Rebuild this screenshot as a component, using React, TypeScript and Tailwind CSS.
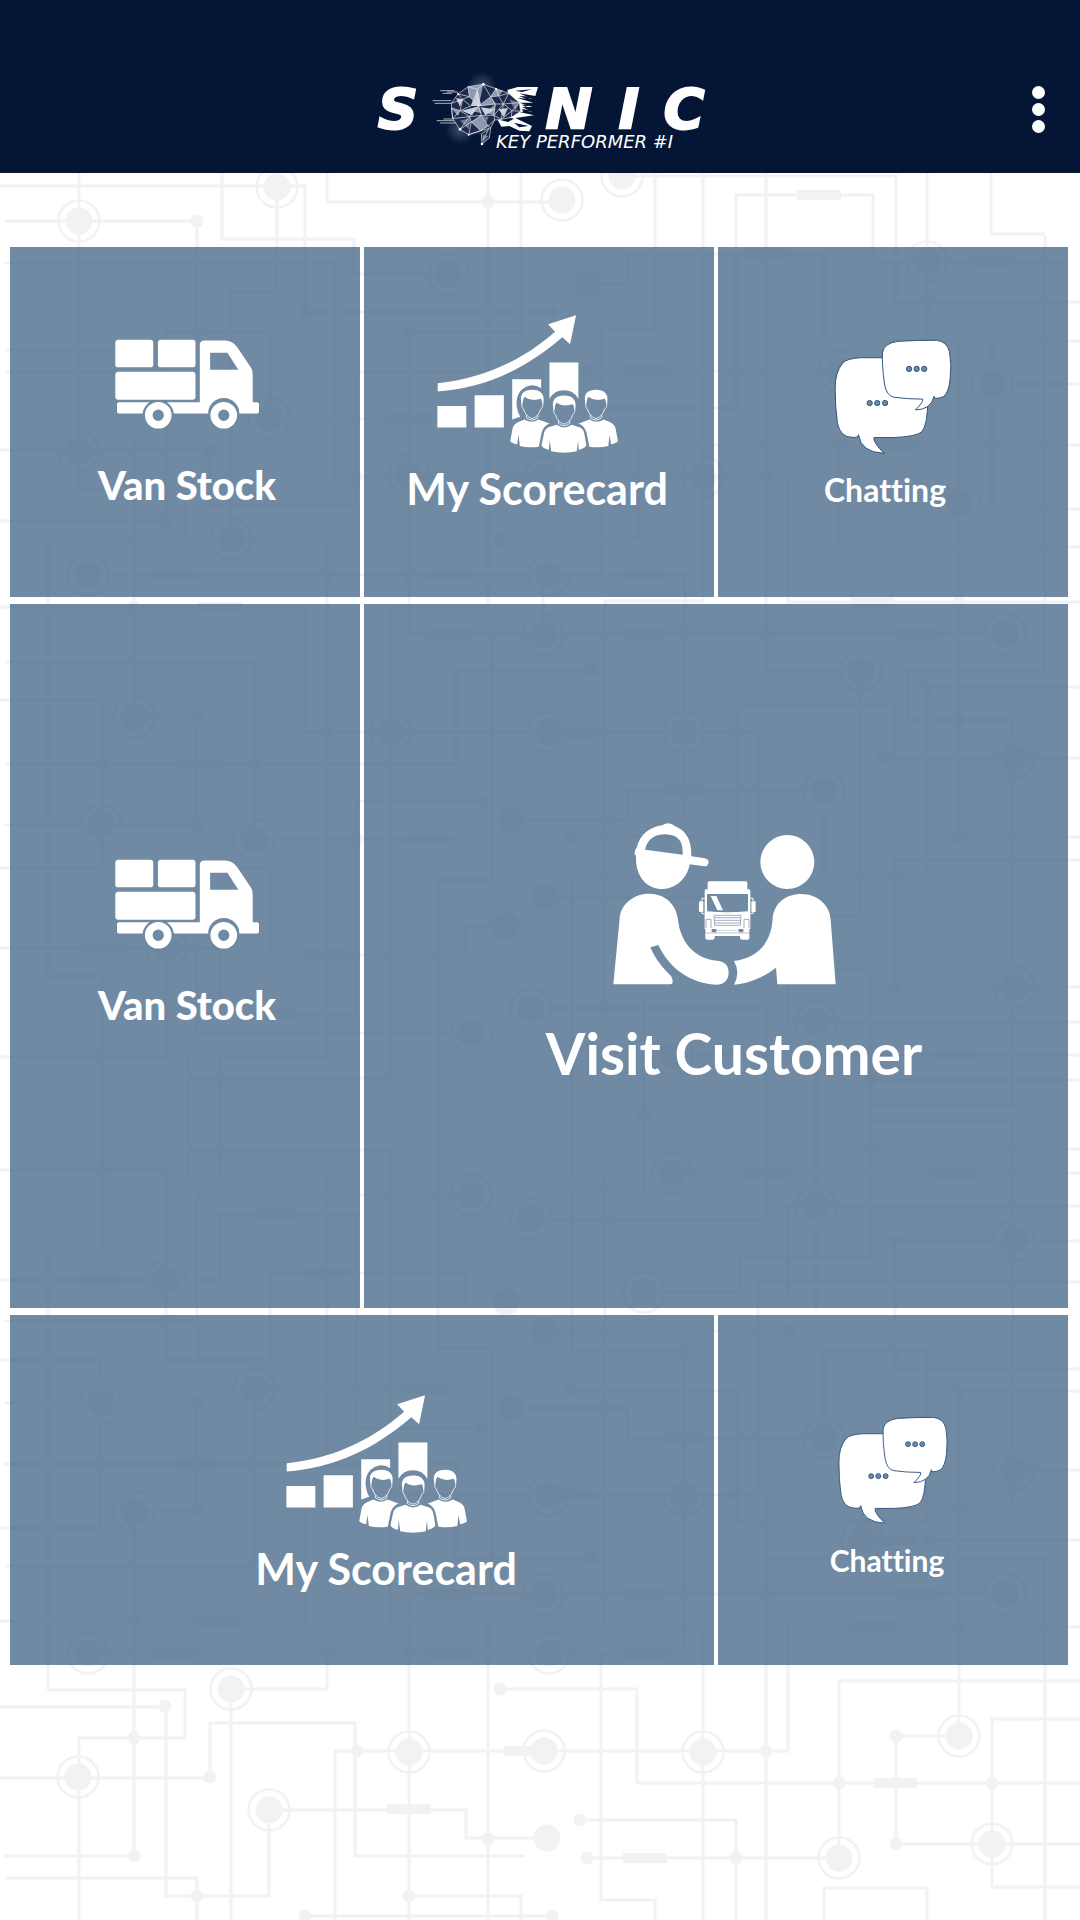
import type { ReactNode } from "react";
import { clsx } from "clsx";

type TileProps = {
  label: string;
  icon: ReactNode;
  className?: string;
  labelClassName: string;
};

// traces of the circuit board behind the tiles
const traces = [
  "M79 173V490H118",
  "M0 186H305V312H552",
  "M277 187V292H231V539",
  "M5 221H197V332",
  "M222 173V239H354V274H449",
  "M327 173V202H488H562",
  "M488 173V607H390V1078H189",
  "M521 173V332H409V634H1005",
  "M5 263H335V477H788V602H1080",
  "M5 350H114M5 372H114",
  "M0 450H210V505H355V372H525",
  "M0 521H166V332H270V419H466V395H490",
  "M134 440V717H197V825H5",
  "M88 575H685V820",
  "M231 539H327V1057H220V1175",
  "M185 505V539H48V976H102V1253H48V1690",
  "M0 607H305V732H758V860",
  "M5 662H254V839H458",
  "M0 700H102V868H0",
  "M5 764H456V670H592",
  "M482 801H357V1014H270",
  "M240 868H270V955H466V926H506",
  "M0 948H220V1014M166 948V1057H0",
  "M197 940V1033H471",
  "M189 1053V1175",
  "M189 1150H390V1621H488V1920",
  "M0 1170H166V1281",
  "M220 1171H327V1464",
  "M471 1195H197V1321",
  "M357 1300V1214H220V1280H0",
  "M466 1302V1273H270V1360H166V1300",
  "M438 1348V880H492V634",
  "M511 820H627V790H824",
  "M605 1008V601H703V173",
  "M543 634V575",
  "M766 173V671H861V916H790",
  "M895 758V705H738V837H570",
  "M1080 687H927V877H824V791",
  "M883 758H1080",
  "M1080 860H895V987H1080",
  "M1045 1920V1558H766V1495",
  "M1045 236V671H908V720H1013V1105H873",
  "M959 345V837H1080",
  "M740 898H545",
  "M700 877H572V1173H605V1627H703V1920",
  "M531 1008H766V1220H531",
  "M644 1115V1189H572V1351H684",
  "M644 1000V1115",
  "M672 1055H1080M672 1173H1080",
  "M1080 1022H788V985M816 1022V1310",
  "M871 1080H1080M871 1149H1080",
  "M830 970H871V1258H740V1292H644",
  "M873 1122H1013V1509",
  "M788 1300V1206H1080",
  "M1080 1241H895V1320",
  "M1080 1282H758V1495H409",
  "M48 1690H185V1738H79V1920",
  "M5 1321H198V1360",
  "M166 1200V1360M166 1706V1896H269V1810H466V1838H547",
  "M0 1360H101V1528H0",
  "M5 1403H197V1511H134V1856",
  "M5 1464H456V1558H592",
  "M254 1389H458M254 1389V1566H5",
  "M357 1300V1428H482",
  "M438 1348H492V1594",
  "M0 1621H305V1510",
  "M1005 1594H409V1920",
  "M88 1653H688M327 1653V1689H231V1920",
  "M0 1707H165",
  "M0 1778H210V1723H355V1856H525",
  "M335 1920V1751H788V1627H1080",
  "M500 1689H637V1783H1080",
  "M601 1653V1900H655V1920",
  "M684 1351V1653",
  "M766 1558V1920",
  "M587 1858H839V1681H1080",
  "M580 1820H736V1920",
  "M544 1331H788",
  "M511 1408H627V1438H824V1351H927V1523H895",
  "M570 1391H738V1523H870",
  "M895 1351V1369H1080",
  "M1080 1391H959V1736H896V1844H1080",
  "M1014 1470H1080",
  "M862 1540V1509H1014M928 1540H1080",
  "M1080 1719H992V1887H1080",
  "M5 1856H134M5 1878H197V1920",
  "M305 1916H552M409 1896H521V1920",
  "M824 1920V1888H927V1920",
  "M622 176H896V302H1080",
  "M655 173V329H601V575",
  "M590 408H736V195H873V262H1065",
  "M927 173V345",
  "M991 173V234H1045",
  "M588 284H627V254H824V341H930",
  "M587 371H839",
  "M992 384H1080M1080 341H992V509H1080",
  "M500 539H638V445H1080",
  "M839 445V547H1080",
  "M959 492V602",
];

const rings = [
  [79, 221], [277, 187], [562, 200], [622, 176], [449, 274], [269, 418],
  [409, 474], [545, 477], [703, 477], [231, 539], [78, 451], [88, 575],
  [549, 575], [927, 262], [839, 371], [992, 384], [959, 503], [134, 717],
  [101, 825], [254, 839], [166, 948], [390, 732], [549, 732], [684, 732],
  [543, 634], [1005, 634], [861, 671], [824, 791], [1014, 758], [471, 1033],
  [531, 1009], [816, 1022], [1014, 987], [672, 1055], [471, 1195],
  [531, 1219], [672, 1173], [816, 1206], [1014, 1241], [166, 1281],
  [644, 1292], [101, 1403], [254, 1389], [134, 1511], [824, 1438],
  [1014, 1470], [549, 1495], [684, 1495], [862, 1540], [543, 1594],
  [1005, 1594], [88, 1653], [549, 1653], [231, 1689], [409, 1752],
  [544, 1751], [703, 1752], [78, 1777], [269, 1810], [959, 1736],
  [992, 1844], [839, 1858],
];

const discs = [
  [588, 284], [511, 820], [545, 897], [506, 926], [506, 1302], [544, 1331],
  [511, 1408], [547, 1838],
];

const dots = [
  [197, 221], [488, 202], [305, 312], [552, 312], [197, 332], [409, 332],
  [210, 451], [356, 477], [165, 521], [327, 575], [409, 575], [134, 607],
  [766, 477], [927, 302], [587, 371], [736, 371], [992, 445], [839, 445],
  [500, 540], [959, 602], [684, 634], [766, 634], [592, 670], [927, 687],
  [197, 717], [327, 732], [736, 732], [959, 720], [883, 758], [102, 764],
  [254, 764], [482, 801], [197, 825], [605, 820], [357, 839], [570, 837],
  [895, 877], [959, 837], [895, 987], [605, 1008], [102, 1057], [219, 1078],
  [219, 1150], [102, 1170], [644, 1115], [871, 1080], [871, 1149],
  [605, 1220], [895, 1241], [166, 1321], [788, 1331], [684, 1351],
  [895, 1351], [357, 1389], [570, 1391], [959, 1391], [197, 1403],
  [605, 1408], [482, 1428], [101, 1464], [253, 1464], [736, 1495],
  [197, 1511], [959, 1509], [928, 1540], [592, 1558], [684, 1594],
  [766, 1594], [134, 1621], [959, 1627], [327, 1653], [409, 1653],
  [500, 1689], [165, 1706], [134, 1738], [357, 1751], [766, 1751],
  [210, 1777], [839, 1783], [992, 1783], [896, 1736], [580, 1820],
  [488, 1839], [896, 1844], [134, 1856], [587, 1858], [736, 1858],
  [197, 1896], [409, 1896], [305, 1916], [552, 1916],
];

const chips = [
  [819, 195], [766, 254], [992, 261], [645, 371], [409, 419], [895, 445],
  [526, 477], [175, 575], [449, 575], [645, 575], [873, 602], [220, 607],
  [449, 634], [645, 634], [918, 634], [573, 733], [197, 764], [685, 790],
  [426, 839], [101, 948], [327, 955], [275, 1014], [955, 1055], [765, 1173],
  [953, 1173], [275, 1214], [327, 1273], [101, 1280], [427, 1389],
  [685, 1438], [197, 1464], [575, 1495], [895, 1540], [449, 1594],
  [645, 1594], [918, 1594], [219, 1621], [873, 1627], [175, 1653],
  [449, 1653], [645, 1653], [526, 1751], [895, 1783], [409, 1809],
  [645, 1858],
];

function CircuitBackground() {
  return (
    <svg
      aria-hidden="true"
      viewBox="0 0 1080 1920"
      preserveAspectRatio="xMidYMin slice"
      className="absolute inset-0 -z-10 h-full w-full text-[#f1f2f4]"
    >
      <path d={traces.join("")} fill="none" stroke="currentColor" strokeWidth="3" />
      {rings.map(([x, y]) => (
        <g key={`${x}-${y}`}>
          <circle cx={x} cy={y} r="20.5" fill="none" stroke="currentColor" strokeWidth="2.5" />
          <circle cx={x} cy={y} r="13.5" fill="currentColor" />
        </g>
      ))}
      {discs.map(([x, y]) => (
        <circle key={`${x}-${y}`} cx={x} cy={y} r="13.5" fill="currentColor" />
      ))}
      {dots.map(([x, y]) => (
        <circle key={`${x}-${y}`} cx={x} cy={y} r="6.5" fill="currentColor" />
      ))}
      {chips.map(([x, y]) => (
        <rect key={`${x}-${y}`} x={x - 22} y={y - 5} width="44" height="10" fill="currentColor" />
      ))}
    </svg>
  );
}

function Logo() {
  return (
    <svg
      role="img"
      aria-label="Sonic Key Performer #I"
      viewBox="0 0 376 76"
      className="h-[76px] w-[376px] overflow-visible"
      fill="#fff"
      fontFamily="'DejaVu Sans', sans-serif"
      fontStyle="italic"
    >
      <defs>
        <radialGradient id="brain-glow">
          <stop offset="0" stopColor="#8fa0c0" stopOpacity="0.4" />
          <stop offset="1" stopColor="#8fa0c0" stopOpacity="0" />
        </radialGradient>
      </defs>
      <g fontSize="56" fontWeight="700" textAnchor="middle" stroke="#fff" strokeWidth="2">
        <text x="46" y="52">S</text>
        <text x="217" y="52">N</text>
        <text x="277" y="52">I</text>
        <text x="332" y="52">C</text>
      </g>
      <text x="144" y="72" fontSize="18">
        KEY PERFORMER #I
      </text>
      <g transform="translate(80 0) scale(.3333)">
        <circle cx="150" cy="32" r="45" fill="url(#brain-glow)" />
        <circle cx="85" cy="160" r="45" fill="url(#brain-glow)" />
        <path
          d="M25 44H68M32 52H60M44 48H78M2 74H58M8 82H60M14 134H66M24 141H72M34 129H62"
          stroke="#fff"
          strokeWidth="2"
        />
        <path d="M226 42L258 33H318L310 60L262 52L300 68L256 66L304 80L262 80L302 92L270 94L300 106L262 108L306 118L250 126L300 150L292 166L262 164L232 150L208 152L196 130L228 138L246 128L226 124L262 100L230 60Z" />
        <path
          d="M250 44L300 40L270 48ZM262 60L312 62L286 70ZM270 86L306 84L280 92ZM246 140L290 150L262 154ZM270 100L304 102L276 112Z"
          fill="#051535"
        />
        <path
          d="M58 82L78 54L108 32L154 25L192 38L230 52L262 80L266 106L238 124L208 130L188 132L176 156L170 160L172 186L150 204L148 174L110 176L84 160L62 128Z"
          fill="#1d2a4b"
        />
        <path
          d="M108 32L154 25L140 90L112 62ZM140 90L176 62L190 84ZM140 90L112 104L150 112ZM118 138L148 118L168 150L146 164ZM176 62L192 38L214 44L200 60ZM58 96L84 104L78 120ZM160 110L190 84L186 118Z"
          fill="#8f99ae"
        />
        <path
          d="M116 90L148 90L136 40ZM88 104L120 118L136 92ZM200 100L228 96L216 124ZM146 94L190 100L160 118ZM72 66L92 70L84 92Z"
          fill="#c9cedb"
        />
        <path
          d="M232 70L262 80L250 104ZM150 120L170 122L160 146ZM84 134L116 126L110 160ZM152 176L170 180L152 200Z"
          fill="#6d7993"
        />
        <path
          d="M58 82L78 54L108 32L154 25L192 38L230 52L262 80L266 106L238 124L208 130L188 132L176 156L146 164L110 176L84 160L62 128ZM58 82L92 70L78 54L112 62L108 32L136 40L154 25L176 62L192 38L200 60L230 52L214 84L262 80L240 104L266 106M92 70L112 62L140 90L176 62L200 60L214 84L190 84L176 62M92 70L84 104L58 96L62 128L84 104L116 90L92 70M84 104L112 122L62 128M112 122L84 160L118 138L112 122L148 118L118 138L110 176L146 164L118 138M148 118L168 150L146 164M148 118L140 90L190 84L186 118L148 118M186 118L214 84L208 130L186 118L188 132L168 150L176 156M208 130L240 104L214 84M240 104L238 124M176 156L172 186L150 204L148 174L170 160L152 192M140 90L112 122M140 90L136 40"
          fill="none"
          stroke="#e8ebf2"
          strokeWidth="2"
        />
        <circle cx="78" cy="54" r="3" />
        <circle cx="154" cy="25" r="4" />
        <circle cx="192" cy="38" r="3" />
        <circle cx="84" cy="160" r="4" />
        <circle cx="150" cy="204" r="4" />
        <circle cx="110" cy="176" r="3" />
      </g>
    </svg>
  );
}

function VanIcon() {
  return (
    <svg aria-hidden="true" viewBox="72 58 436 270" className="h-[90px] w-[145px]" fill="currentColor">
      <rect x="73" y="60" width="114" height="83" rx="9" />
      <rect x="201" y="60" width="113" height="83" rx="9" />
      <rect x="73" y="156" width="241" height="84" rx="9" />
      <path d="M84 248H176A47 47 0 0 0 155 282H84q-6 0-6-6V254q0-6 6-6z" />
      <path
        fillRule="evenodd"
        d="M327 248H228A47 47 0 0 1 249 282H352A47 47 0 0 1 446 282H499q6 0 6-6V254q0-6-6-6H486V163q0-12-6-20L439 82Q426 62 403 62H341q-14 0-14 14zM358 99H410L443 150H358z"
      />
      <path
        fillRule="evenodd"
        d="M162 287a40 40 0 1 0 80 0a40 40 0 1 0-80 0zM185 287a17 17 0 1 1 34 0a17 17 0 1 1-34 0zM359 287a40 40 0 1 0 80 0a40 40 0 1 0-80 0zM382 287a17 17 0 1 1 34 0a17 17 0 1 1-34 0z"
      />
    </svg>
  );
}

function Head({ x, y }: { x: number; y: number }) {
  return (
    <g transform={`translate(${x} ${y})`}>
      <path d="M-33 35C-37 10-22 0 0 0C25 0 38 14 34 36L30 46C31 36 29 30 25 26C8 34-12 30-22 21C-28 27-28 35-29 46Z" />
      <path
        d="M-31 36C-33 50-28 56-26 58C-20 76-10 84 0 86C10 84 20 76 26 58C30 54 34 50 32 36M-17 76V84Q0 98 17 84V76"
        fill="none"
        stroke="currentColor"
        strokeWidth="2.5"
      />
    </g>
  );
}

function ScorecardIcon() {
  const shoulder =
    "M313 362Q335 376 355 362L388 374Q370 382 365 400L356 444Q325 448 299 442L295 408L291 437Q275 434 270 428L277 390Q280 376 295 370z";

  return (
    <svg aria-hidden="true" viewBox="50 48 544 415" className="mr-5 h-[138px] w-[181px]" fill="currentColor">
      <path d="M52 253C180 240 300 190 405 98L384 76L468 49L450 136L427 115C310 215 190 268 52 278z" />
      <path d="M51 322H138V386H51zM163 289H251V386H163z" />
      <path d="M276 241H363V268A48 52 0 0 0 289 310Q289 335 300 354L276 362z" />
      <path d="M388 191H475V300A50 50 0 0 0 388 300z" />
      <Head x={336} y={273} />
      <Head x={528} y={273} />
      <path d={shoulder} />
      <path d={shoulder} transform="matrix(-1 0 0 1 864 0)" />
      <Head x={432} y={290} />
      <path d="M410 378Q432 394 455 378L480 386Q490 390 493 405L499 440Q495 450 476 454L474 425L470 458Q432 466 393 458L389 425L386 454Q368 450 364 440L372 402Q376 388 390 384z" />
    </svg>
  );
}

function ChatIcon({ className }: { className: string }) {
  return (
    <svg
      aria-hidden="true"
      viewBox="69 53 358 350"
      className={className}
      fill="#fff"
      stroke="#2c527f"
      strokeWidth="3"
    >
      <path d="M215 110H150Q108 112 95 126Q71 155 72 205Q72 260 79 310Q88 350 120 352Q134 354 142 350L143 344Q150 398 221 401Q186 366 190 353H250Q320 350 336 335Q353 315 354 240Z" />
      <path d="M265 60Q330 56 380 57Q412 60 420 92Q427 130 422 175Q418 215 402 228Q390 234 374 234L373 227Q364 268 316 269Q342 244 338 236Q290 236 250 230Q228 225 222 190Q214 130 216 95Q220 65 265 60z" />
      <g fill="#708aa4">
        <circle cx="297" cy="144" r="8" />
        <circle cx="320" cy="144" r="8" />
        <circle cx="343" cy="144" r="8" />
        <circle cx="177" cy="248" r="8" />
        <circle cx="200" cy="248" r="8" />
        <circle cx="224" cy="248" r="8" />
      </g>
    </svg>
  );
}

function VisitIcon() {
  return (
    <svg aria-hidden="true" viewBox="37 39 669 486" className="mr-5 h-[162px] w-[223px]" fill="currentColor">
      <path
        fillRule="evenodd"
        d="M102 133Q100 122 108 113C118 72 150 50 185 46Q205 33 222 48C258 62 273 92 272 139L313 145Q324 148 324 158Q321 170 311 169L267 163C260 205 225 237 186 237C140 237 104 202 106 138zM133 119C140 88 162 72 195 73C232 75 248 92 246 134z"
      />
      <path d="M57 325C60 282 100 251 145 251C195 251 228 285 232 330C240 400 285 447 350 452Q384 456 384 488Q382 524 345 524C270 520 205 475 173 405L149 412C165 450 190 478 211 498Q218 508 216 518Q214 523 208 523H38z" />
      <circle cx="560" cy="156" r="81" />
      <path d="M516 325C520 280 555 252 602 252C650 252 688 285 690 330L705 523H530L526 473C490 500 450 520 400 524Q420 488 400 453C470 445 512 400 516 325z" />
      <path d="M325 214H435Q439 214 440 218V238H445Q449 239 449 243V357H312V243Q312 239 316 238H321V218Q322 214 325 214z" />
      <rect x="295" y="274" width="13" height="32" rx="3" />
      <rect x="452" y="274" width="13" height="32" rx="3" />
      <path
        d="M312 265H304V274M304 306V311H312M449 265H457V274M457 306V311H449"
        fill="none"
        stroke="currentColor"
        strokeWidth="3"
      />
      <path d="M319 252H442V304Q380 310 319 304z" fill="#708aa4" />
      <path d="M330 258H347L367 301H350z" />
      <path
        d="M340 316H421L419 346H342zM341 323H420M341 331H420M342 339H419M316 354V328H331V354M430 354V328H445V354"
        fill="none"
        stroke="#708aa4"
        strokeWidth="2"
      />
      <path d="M314 357H446V368H314z" />
      <path d="M333 357H347V367H333zM414 357H428V367H414z" fill="#708aa4" />
      <path d="M347 361H414" stroke="#708aa4" strokeWidth="1" />
      <path d="M314 370H446V385Q445 389 441 389H423Q419 388 418 384V378H342V384Q341 388 337 389H319Q314 388 314 384z" />
    </svg>
  );
}

function Tile({ label, icon, className, labelClassName }: TileProps) {
  return (
    <button
      type="button"
      className={clsx(
        "flex cursor-pointer flex-col items-center justify-center bg-[#426384]/75 text-white",
        className,
      )}
    >
      {icon}
      <span className={clsx("whitespace-nowrap", labelClassName)}>{label}</span>
    </button>
  );
}

export default function App() {
  return (
    <div className="relative isolate min-h-screen bg-white font-['Lato',sans-serif] [font-variant-ligatures:none]">
      <CircuitBackground />

      <header className="grid grid-cols-[1fr_auto_1fr] items-center bg-[#051535] pt-[76px] pb-[21px]">
        <h1 className="col-start-2">
          <Logo />
        </h1>
        <button
          type="button"
          aria-label="More options"
          className="mr-[35px] flex cursor-pointer flex-col gap-1 justify-self-end pb-[10px]"
        >
          <span className="size-[13px] rounded-full bg-white" />
          <span className="size-[13px] rounded-full bg-white" />
          <span className="size-[13px] rounded-full bg-white" />
        </button>
      </header>

      <main className="grid grid-cols-3 gap-x-1 gap-y-[7px] pt-[74px] pr-3 pb-10 pl-[10px]">
        <Tile
          label="Van Stock"
          icon={<VanIcon />}
          className="aspect-square pt-1 pl-1"
          labelClassName="mt-8 text-[40px] leading-[48px] font-black"
        />
        <Tile
          label="My Scorecard"
          icon={<ScorecardIcon />}
          className="aspect-square pr-1 pb-4"
          labelClassName="mt-3 text-[43px] leading-[48px] font-bold"
        />
        <Tile
          label="Chatting"
          icon={<ChatIcon className="h-[115px] w-[118px]" />}
          className="aspect-square pt-1"
          labelClassName="mt-4 mr-4 text-[32px] leading-10 font-bold"
        />

        <Tile
          label="Van Stock"
          icon={<VanIcon />}
          className="pb-6 pl-1"
          labelClassName="mt-8 text-[40px] leading-[48px] font-black"
        />
        <Tile
          label="Visit Customer"
          icon={<VisitIcon />}
          className="col-span-2 aspect-square pb-1 pl-9"
          labelClassName="mt-9 text-[57px] leading-[64px] font-bold"
        />

        <Tile
          label="My Scorecard"
          icon={<ScorecardIcon />}
          className="col-span-2 pt-2 pl-12"
          labelClassName="mt-3 text-[43px] leading-[48px] font-bold"
        />
        <Tile
          label="Chatting"
          icon={<ChatIcon className="h-[108px] w-[110px]" />}
          className="aspect-square pt-4"
          labelClassName="mt-4 mr-3 text-[30px] leading-10 font-bold"
        />
      </main>
    </div>
  );
}
